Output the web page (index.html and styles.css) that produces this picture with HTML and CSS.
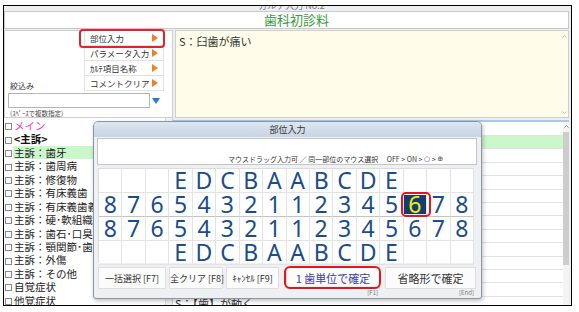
FILE: index.html
```html
<!DOCTYPE html>
<html lang="ja">
    <head>
        <meta charset="UTF-8" />
        <meta name="viewport" content="width=device-width, initial-scale=1.0" />
        <title>部位入力</title>
        <link rel="stylesheet" href="styles.css">
    </head>
    <body>
        <div class="frame">
            <div class="strip"><span>カルテ入力 No.2</span></div>
            <div class="title">歯科初診料</div>

            <div class="upper">
                <div class="filter">
                    <div class="filter-top">
                        <label class="filter-label" for="filter-input">絞込み</label>
                        <ul class="menu">
                            <li class="menu-item marked">部位入力<span class="arrow"></span></li>
                            <li class="menu-item">パラメータ入力<span class="arrow"></span></li>
                            <li class="menu-item">ｶﾙﾃ項目名称<span class="arrow"></span></li>
                            <li class="menu-item">コメントクリア<span class="arrow"></span></li>
                        </ul>
                    </div>
                    <div class="filter-row">
                        <input class="filter-input" id="filter-input" type="text" />
                        <span class="drop"></span>
                    </div>
                    <div class="filter-note">(ｽﾍﾟｰｽで複数指定)</div>
                </div>
                <div class="memo">
                    <p class="memo-text">S：臼歯が痛い</p>
                    <div class="vscroll">
                        <svg width="5" height="3" viewBox="0 0 5 3"><polyline points="0.5,2.5 2.5,0.5 4.5,2.5" fill="none" stroke="#b0b0b0" stroke-width="0.8"/></svg>
                        <svg width="5" height="3" viewBox="0 0 5 3"><polyline points="0.5,0.5 2.5,2.5 4.5,0.5" fill="none" stroke="#b0b0b0" stroke-width="0.8"/></svg>
                    </div>
                </div>
            </div>

            <div class="lower">
                <ul class="tree">
                    <li class="main"><span class="box"></span><span class="label">メイン</span></li>
                    <li class="group"><span class="box"></span><span class="label">&lt;主訴&gt;</span></li>
                    <li class="on"><span class="box"></span><span class="label">主訴：歯牙</span></li>
                    <li><span class="box"></span><span class="label">主訴：歯周病</span></li>
                    <li><span class="box"></span><span class="label">主訴：修復物</span></li>
                    <li><span class="box"></span><span class="label">主訴：有床義歯</span></li>
                    <li><span class="box"></span><span class="label">主訴：有床義歯義歯破折</span></li>
                    <li><span class="box"></span><span class="label">主訴：硬･軟組織</span></li>
                    <li><span class="box"></span><span class="label">主訴：歯石･口臭</span></li>
                    <li><span class="box"></span><span class="label">主訴：顎関節･歯ぎしり</span></li>
                    <li><span class="box"></span><span class="label">主訴：外傷</span></li>
                    <li><span class="box"></span><span class="label">主訴：その他</span></li>
                    <li><span class="box"></span><span class="label">自覚症状</span></li>
                    <li><span class="box"></span><span class="label">他覚症状</span></li>
                </ul>
                <div class="tree-bar"></div>
                <div class="records">
                    <div class="records-list">
                        <div class="rec-head"></div>
                        <div class="rec on">S：臼歯が痛い</div>
                        <div class="rec">S：歯がしみる</div>
                        <div class="rec">S：歯が欠けた</div>
                        <div class="rec">S：詰め物が取れた</div>
                        <div class="rec">S：歯ぐきが腫れた</div>
                        <div class="rec">S：歯ぐきから血が出る</div>
                        <div class="rec">S：冠が取れた</div>
                        <div class="rec">S：入れ歯が痛い</div>
                        <div class="rec">S：入れ歯が壊れた</div>
                        <div class="rec">S：口臭が気になる</div>
                        <div class="rec">S：顎が痛い</div>
                        <div class="rec">S：【歯】が動く</div>
                        <div class="rec">S：【歯】が動く</div>
                    </div>
                    <div class="scrollbar">
                        <div class="scroll-up">
                            <svg width="5" height="3" viewBox="0 0 5 3"><polyline points="0.5,2.5 2.5,0.5 4.5,2.5" fill="none" stroke="#777" stroke-width="0.9"/></svg>
                        </div>
                        <div class="thumb"></div>
                    </div>
                </div>
            </div>

            <div class="dialog">
                <div class="dialog-title">部位入力</div>
                <div class="dialog-body">
                    <div class="hint">マウスドラッグ入力可 ／ 同一部位のマウス選択　 OFF &gt; ON &gt; <span class="sym">○</span> &gt; <span class="sym">⊕</span></div>
                    <div class="chart">
                        <span></span><span></span><span></span><span>E</span><span>D</span><span>C</span><span>B</span><span>A</span>
                        <span>A</span><span>B</span><span>C</span><span>D</span><span>E</span><span></span><span></span><span></span>

                        <span class="mid">8</span><span class="mid">7</span><span class="mid">6</span><span class="mid">5</span>
                        <span class="mid">4</span><span class="mid">3</span><span class="mid">2</span><span class="mid">1</span>
                        <span class="mid">1</span><span class="mid">2</span><span class="mid">3</span><span class="mid">4</span>
                        <span class="mid">5</span><span class="mid sel">6</span><span class="mid">7</span><span class="mid">8</span>

                        <span>8</span><span>7</span><span>6</span><span>5</span><span>4</span><span>3</span><span>2</span><span>1</span>
                        <span>1</span><span>2</span><span>3</span><span>4</span><span>5</span><span>6</span><span>7</span><span>8</span>

                        <span></span><span></span><span></span><span>E</span><span>D</span><span>C</span><span>B</span><span>A</span>
                        <span>A</span><span>B</span><span>C</span><span>D</span><span>E</span><span></span><span></span><span></span>
                    </div>
                    <div class="actions">
                        <div class="act act-all"><button class="btn">一括選択 [F7]</button></div>
                        <div class="act act-clear"><button class="btn">全クリア [F8]</button></div>
                        <div class="act act-cancel"><button class="btn">ｷｬﾝｾﾙ [F9]</button></div>
                        <div class="act act-tooth">
                            <button class="btn big confirm">1 歯単位で確定</button>
                            <span class="key">[F1]</span>
                        </div>
                        <div class="act act-short">
                            <button class="btn big">省略形で確定</button>
                            <span class="key">[End]</span>
                        </div>
                    </div>
                </div>
            </div>
        </div>
    </body>
</html>
```

FILE: styles.css
```css
* {
    box-sizing: border-box;
}

body {
    margin: 0;
    background-color: #fff;
    font-family: "Noto Sans CJK JP", "Noto Sans", sans-serif;
    color: #222;
}

.frame {
    position: relative;
    width: 569px;
    height: 301px;
    margin: 5px 0 0 3px;
    border: 1px solid #000;
    background-color: #eceef0;
    overflow: hidden;
}

/* cut off header line above the title */
.strip {
    height: 5px;
    overflow: hidden;
}

.strip span {
    display: block;
    margin-top: -6px;
    padding-left: 8px;
    font-size: 9px;
    line-height: 11px;
    text-align: center;
    color: #777;
}

.title {
    height: 18px;
    margin-right: 2px;
    padding-left: 20px;
    background-color: #fff;
    border: 1px solid #c9c9c9;
    font-size: 13px;
    line-height: 16px;
    text-align: center;
    color: #3c9a3c;
}

.upper {
    display: flex;
    height: 88px;
    margin-top: 1px;
    padding-right: 2px;
}

.filter {
    width: 169px;
    padding: 0 8px 0 3px;
    display: flex;
    flex-direction: column;
    background-color: #fff;
    border: 1px solid #cfcfcf;
}

.filter-top {
    display: flex;
    align-items: flex-end;
    justify-content: space-between;
    height: 62px;
}

.filter-label {
    margin: 0 0 1px 2px;
    font-size: 8px;
    line-height: 11px;
    color: #333;
}

.menu {
    align-self: flex-start;
    width: 80px;
    margin: 0;
    padding: 0;
    list-style: none;
    border-left: 1px solid #e2e2e2;
    border-right: 1px solid #e2e2e2;
}

.menu-item {
    position: relative;
    display: flex;
    align-items: center;
    justify-content: space-between;
    height: 15px;
    padding: 0 5px 0 5px;
    border-bottom: 1px solid #e2e2e2;
    font-size: 8.5px;
    line-height: 14px;
    color: #333;
    white-space: nowrap;
}

.arrow {
    border-left: 6px solid #f07c2c;
    border-top: 4px solid transparent;
    border-bottom: 4px solid transparent;
}

.marked::after {
    content: "";
    position: absolute;
    left: -6px;
    right: -2px;
    top: -2px;
    bottom: -3px;
    border: 2px solid #e0242b;
    border-radius: 4px;
}

.filter-row {
    display: flex;
    align-items: center;
    height: 15px;
    margin-top: 1px;
}

.filter-input {
    width: 142px;
    height: 15px;
    margin: 0;
    padding: 0;
    border: 1px solid #b5b5b5;
    background-color: #fff;
}

.drop {
    margin-left: 2px;
    border-top: 6px solid #2b7bd6;
    border-left: 4px solid transparent;
    border-right: 4px solid transparent;
}

.filter-note {
    margin: 1px 0 0 2px;
    font-size: 6.5px;
    line-height: 8px;
    color: #444;
    white-space: nowrap;
}

.memo {
    display: flex;
    flex: 1;
    margin-left: 2px;
    background-color: #fffde9;
    border: 1px solid #cfcfcf;
}

.memo-text {
    flex: 1;
    margin: 0;
    padding: 4px 3px;
    font-size: 11px;
    line-height: 13px;
    color: #333;
}

.vscroll {
    width: 8px;
    padding: 4px 0 3px;
    display: flex;
    flex-direction: column;
    justify-content: space-between;
    align-items: center;
}

.vscroll svg,
.scroll-up svg {
    display: block;
}

.lower {
    display: flex;
    height: 187px;
}

.tree {
    width: 161px;
    margin: 0;
    padding: 1px 0 0;
    list-style: none;
    background-color: #fff;
    overflow: hidden;
}

.tree li {
    display: flex;
    align-items: center;
    height: 13.45px;
    font-size: 10.5px;
    line-height: 13px;
    white-space: nowrap;
}

.box {
    flex: none;
    width: 7px;
    height: 7px;
    margin: 2px 1px 0 1px;
    border: 1px solid #8a8a8a;
    background-color: #fff;
}

.tree .label {
    flex: 1;
    height: 100%;
    padding-left: 1px;
}

.tree .on .label {
    background-color: #cbf7cb;
}

.tree .main .label {
    color: #f03ad0;
}

.tree .group .label {
    font-weight: bold;
    color: #111;
}

.tree-bar {
    width: 8px;
    background-color: #f3f3f3;
    border-left: 1px solid #ddd;
    border-right: 1px solid #cfcfcf;
}

.records {
    display: flex;
    flex: 1;
    margin: 2px 2px 0 0;
    background-color: #fff;
    border-top: 2px solid #a9c8ee;
}

.records-list {
    flex: 1;
    overflow: hidden;
}

.rec-head {
    height: 14px;
    border-bottom: 1px solid #e2e2e2;
}

.rec {
    height: 13.4px;
    padding-left: 2px;
    border-bottom: 1px solid #e2e2e2;
    font-size: 11px;
    line-height: 12px;
    color: #333;
    white-space: nowrap;
}

.rec.on {
    background-color: #cbf7cb;
}

.scrollbar {
    width: 6px;
    background-color: #f4f4f4;
}

.scroll-up {
    height: 10px;
    padding-top: 3px;
    display: flex;
    justify-content: center;
}

.thumb {
    height: 133px;
    background-color: #cdcdcd;
}

/* the 部位入力 dialog lies over the lists */
.dialog {
    position: absolute;
    left: 89px;
    top: 115px;
    width: 389px;
    height: 178px;
    background-color: #eef0f3;
    border: 1px solid #8a96a6;
    border-radius: 5px 5px 3px 3px;
    box-shadow: 1px 2px 4px rgba(0, 0, 0, 0.25);
}

.dialog-title {
    height: 15px;
    border-radius: 4px 4px 0 0;
    background: linear-gradient(#dde6f0, #c7d4e4);
    font-size: 9px;
    line-height: 15px;
    text-align: center;
    color: #333;
}

.dialog-body {
    padding: 1px 4px 0 3px;
}

.hint {
    display: flex;
    align-items: flex-end;
    justify-content: flex-end;
    height: 27px;
    padding: 0 33px 1px 0;
    background-color: #fff;
    border: 1px solid #c5c5c5;
    font-size: 7px;
    line-height: 8px;
    color: #333;
    white-space: pre;
}

.sym {
    font-family: "DejaVu Sans", sans-serif;
    color: #444;
}

.chart {
    display: grid;
    grid-template-columns: repeat(16, 1fr);
    grid-template-rows: repeat(4, 1fr);
    width: 376px;
    height: 95px;
    margin: 3px 2px 0 1px;
    background-color: #fff;
    border-top: 1px solid #dcdcdc;
    border-left: 1px solid #dcdcdc;
}

.chart span {
    border-right: 1px solid #e3e3e3;
    border-bottom: 1px solid #e3e3e3;
    font-family: "Noto Sans", "Open Sans", sans-serif;
    font-size: 23px;
    line-height: 23px;
    text-align: center;
    color: #1b4c8c;
}

.chart .mid {
    border-bottom-color: #c4c4c4;
}

.chart .sel {
    position: relative;
    z-index: 1;
    background-color: #133d70;
    color: #f2ee00;
    box-shadow: inset 0 2px #fff, inset 0 -2px #fff;
}

.chart .sel::after {
    content: "";
    position: absolute;
    top: -1px;
    bottom: -1px;
    left: -3px;
    right: -5px;
    border: 2.5px solid #e3161d;
    border-radius: 5px;
}

.actions {
    display: flex;
    margin: 4px 0 0 1px;
}

.act {
    display: flex;
    flex-direction: column;
    align-items: flex-end;
}

.act-all { width: 68px; }
.act-clear { width: 54px; margin-left: 3px; }
.act-cancel { width: 53px; margin-left: 3px; }
.act-tooth { width: 94px; margin-left: 7px; }
.act-short { width: 91px; margin-left: 5px; }

.btn {
    position: relative;
    width: 100%;
    height: 22px;
    margin: 0;
    padding: 0;
    background-color: #fbfbfb;
    border: 1px solid #dedede;
    font-family: "Noto Sans CJK JP", "Noto Sans", sans-serif;
    font-size: 9px;
    color: #333;
    white-space: nowrap;
}

.btn.big {
    font-size: 11px;
}

.btn.confirm {
    color: #3b3f9e;
}

.btn.confirm::after {
    content: "";
    position: absolute;
    top: -2px;
    bottom: -1px;
    left: -3px;
    right: -2px;
    border: 2.5px solid #e3161d;
    border-radius: 6px;
}

.key {
    margin-right: 2px;
    font-size: 6px;
    line-height: 7px;
    color: #777;
}
```
